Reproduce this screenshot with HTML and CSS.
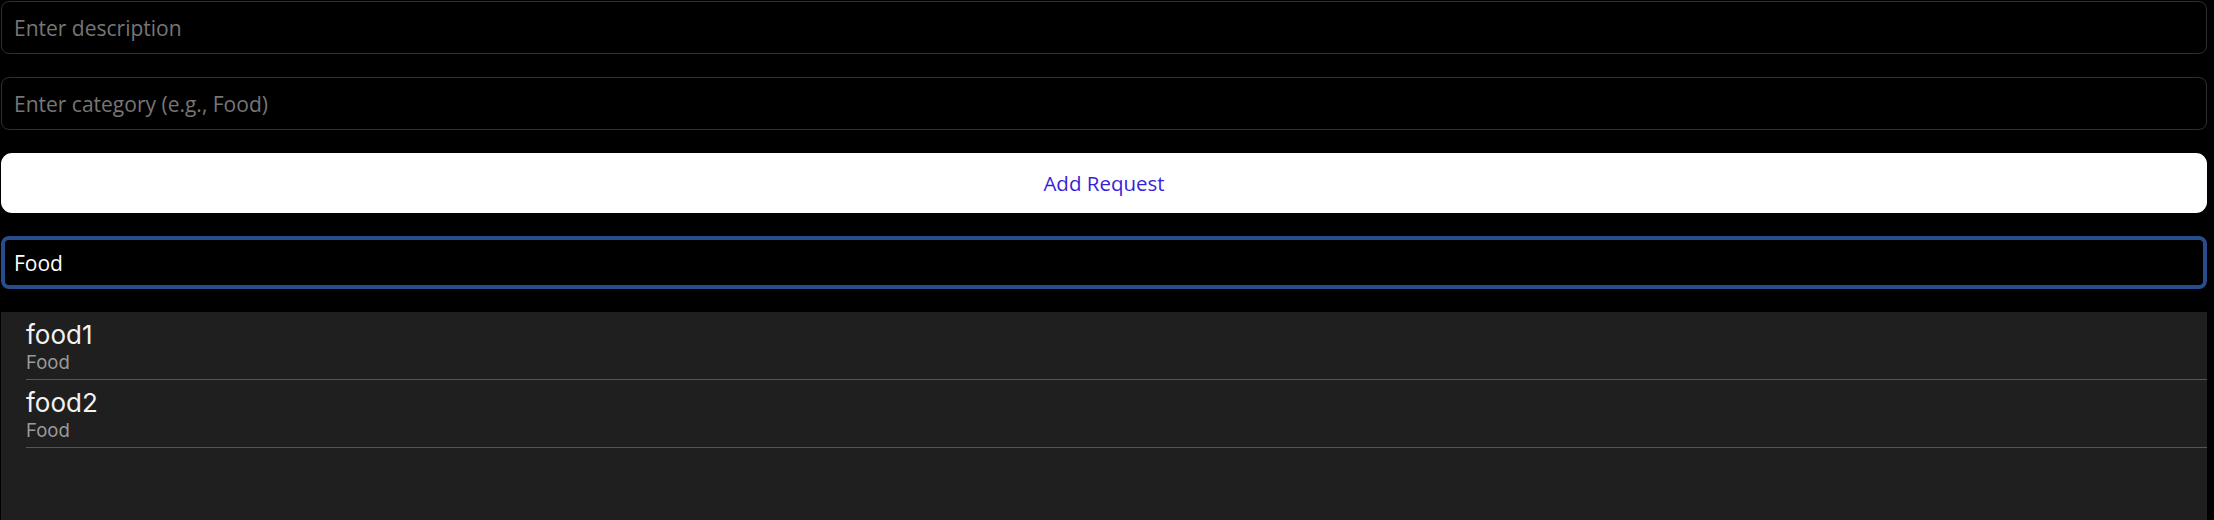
FILE: index.html
```html
<!DOCTYPE html>
<html lang="en">
<head>
<meta charset="utf-8">
<title>Requests</title>
<link rel="stylesheet" href="styles.css">
</head>
<body>
<main class="page">
  <input class="field" type="text" placeholder="Enter description">
  <input class="field" type="text" placeholder="Enter category (e.g., Food)">
  <button class="add-btn" type="button">Add Request</button>
  <input class="field field-focus" type="text" value="Food">
  <ul class="list">
    <li class="item">
      <div class="item-title">food1</div>
      <div class="item-sub">Food</div>
    </li>
    <li class="item">
      <div class="item-title">food2</div>
      <div class="item-sub">Food</div>
    </li>
  </ul>
</main>
</body>
</html>
```
FILE: styles.css
```css
* { box-sizing: border-box; }
html, body {
  margin: 0;
  padding: 0;
  background: #000;
  height: 100%;
}
.page {
  display: flex;
  flex-direction: column;
  gap: 23px;
  height: 100vh;
  padding: 1px 7px 0 1px;
  font-family: "Open Sans", sans-serif;
  overflow: hidden;
}
.field {
  display: block;
  width: 100%;
  height: 53px;
  flex: none;
  background: #000;
  border: 1px solid #303030;
  border-radius: 8px;
  padding: 0 12px;
  font-family: "Open Sans", sans-serif;
  font-size: 21px;
  color: #fff;
  outline: none;
}
.field::placeholder { color: #767676; }
.field-focus {
  border: 4px solid #284c8c;
  border-radius: 8px;
  padding: 0 9px;
}
.add-btn {
  display: block;
  width: 100%;
  height: 60px;
  flex: none;
  background: #fff;
  border: none;
  border-radius: 11px;
  font-family: "Open Sans", sans-serif;
  font-size: 20.5px;
  color: #3a1fd8;
  cursor: pointer;
}
.list {
  flex: 1;
  margin: 0;
  padding: 0 0 0 25px;
  list-style: none;
  background: #1f1f1f;
}
.item {
  height: 68px;
  padding-top: 8px;
  border-bottom: 1px solid #555;
  font-family: Inter, "Liberation Sans", sans-serif;
}
.item-title {
  font-size: 26px;
  line-height: 30px;
  color: #f2f2f2;
}
.item-sub {
  font-size: 18.5px;
  line-height: 24px;
  color: #9a9a9a;
}
```
